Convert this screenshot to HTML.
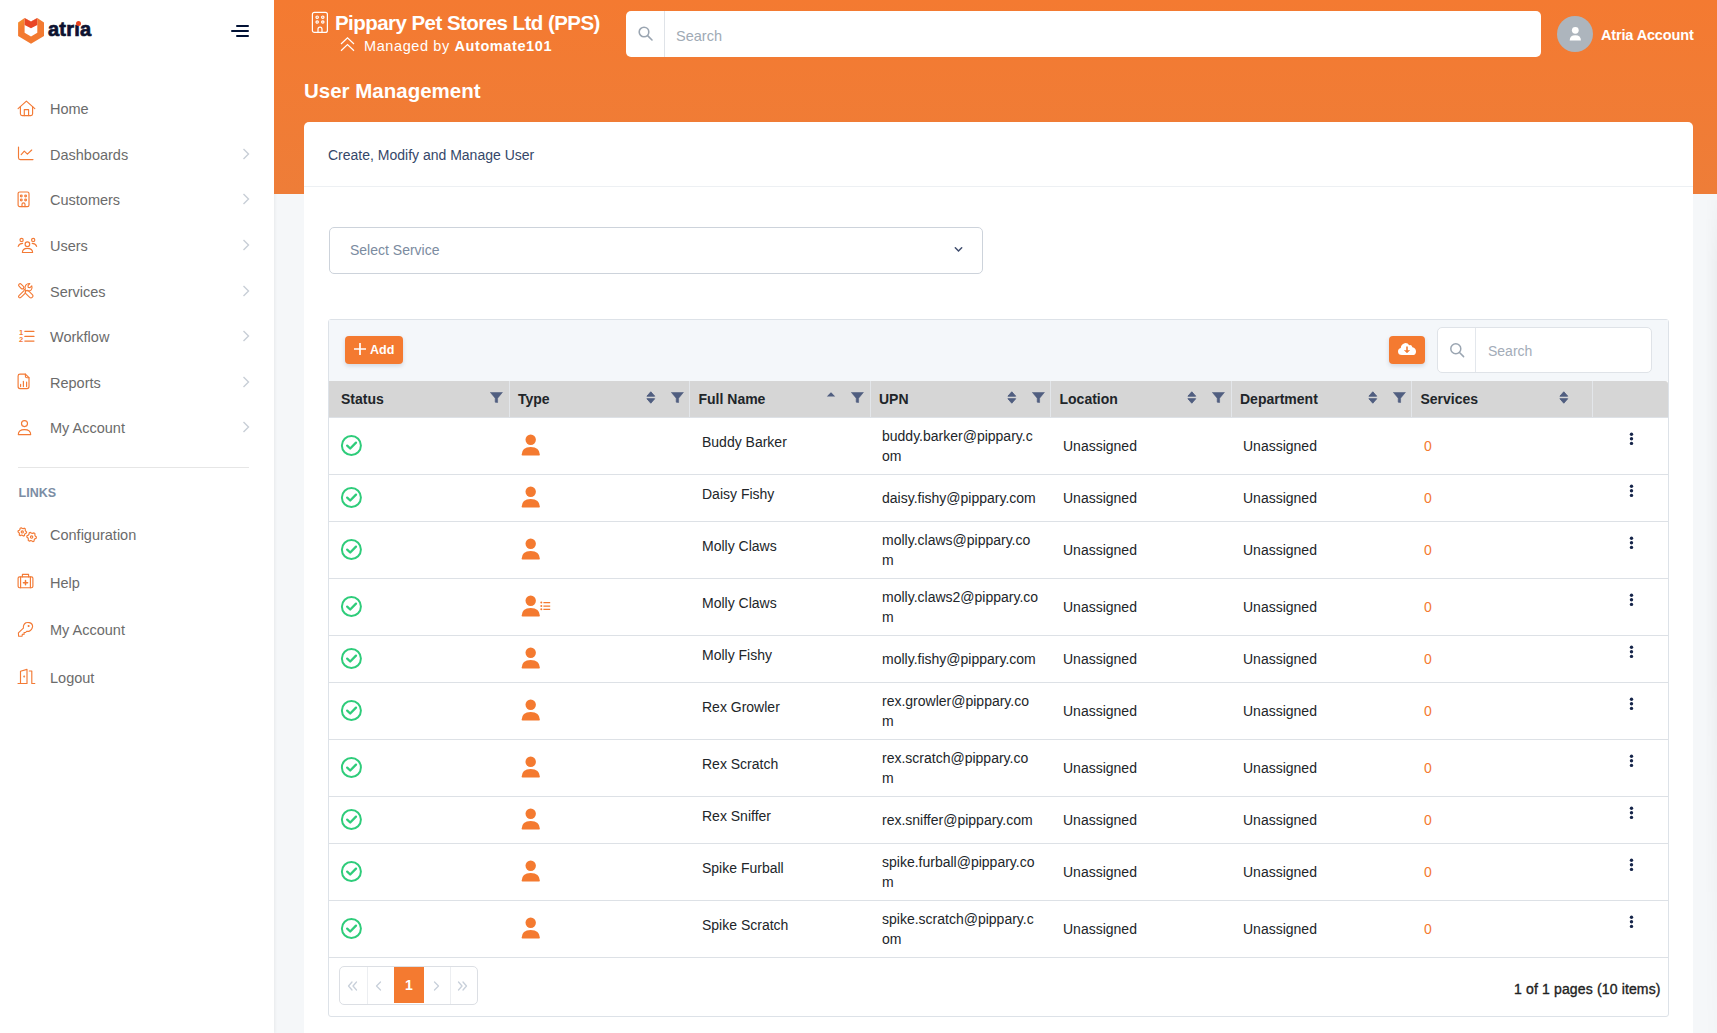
<!DOCTYPE html>
<html><head><meta charset="utf-8">
<style>
*{box-sizing:border-box;margin:0;padding:0}
html,body{width:1717px;height:1033px;overflow:hidden;background:#f5f7f9;font-family:"Liberation Sans",sans-serif}
.abs{position:absolute}
.tx{height:16px;line-height:16px;white-space:nowrap}
#side{position:absolute;left:0;top:0;width:274px;height:1033px;background:#fff;box-shadow:1px 0 3px rgba(0,0,0,.06)}
.nt{position:absolute;left:50px;height:20px;line-height:20px;font-size:14.5px;color:#6b6b6b;white-space:nowrap}
.nav{position:absolute;left:0;width:274px;height:20px;font-size:15px;color:#5f6368;line-height:20px}
.nav .t{position:absolute;left:50px;top:0}
.nav svg.i{position:absolute;left:18px;top:1px}
.nav svg.c{position:absolute;left:240px;top:4px}
#band{position:absolute;left:274px;top:0;width:1443px;height:194px;background:linear-gradient(#f47a31,#ee7d38)}
#card{position:absolute;left:304px;top:122px;width:1389px;height:920px;background:#fff;border-radius:5px 5px 0 0}
</style></head>
<body>

<div id="side">
 <svg class="abs" style="left:15px;top:15px" width="32" height="32" viewBox="0 0 32 32">
  <defs><linearGradient id="lg" x1="0" y1="0" x2="0.5" y2="0.6"><stop offset="0" stop-color="#f6962a"/><stop offset="0.5" stop-color="#f37a30"/><stop offset="1" stop-color="#f37a30"/></linearGradient></defs>
  <path d="M3.1 7.4 L9.6 2.9 L16 6.5 L22.3 2.9 L29 7.4 L29 21.1 L16 28.8 L3.1 21.1 Z" fill="url(#lg)"/>
  <path d="M9.6 2.9 L16 6.5 L22.3 2.9 L22.3 17.8 L16 21.4 L9.6 17.8 Z" fill="#fff"/>
  <path d="M9.6 2.9 L16 6.5 L22.3 2.9 L22.3 9.9 L16 13.3 L9.6 9.9 Z" fill="#e94624"/>
 </svg>
 <div class="abs" style="left:48px;top:17px;height:24px;line-height:24px;font-size:20px;font-weight:bold;color:#0d1230;letter-spacing:0.2px;-webkit-text-stroke:0.7px #0d1230">atr&#305;a</div>
 <div class="abs" style="left:76px;top:20.5px;width:5px;height:5px;border-radius:50%;background:#e9441f"></div>
 <svg class="abs" style="left:230px;top:24px" width="20" height="14"><rect x="6" y="1" width="13" height="2" rx="1" fill="#011135"/><rect x="1" y="6" width="18" height="2" rx="1" fill="#011135"/><rect x="6" y="11" width="13" height="2" rx="1" fill="#011135"/></svg>
<div class="nt" style="top:99px">Home</div>
<div class="nt" style="top:145px">Dashboards</div>
<svg class="abs" style="left:242px;top:148px" width="8" height="12" viewBox="0 0 8 12"><path d="M1.5 1 L6.5 6 L1.5 11" fill="none" stroke="#c8ced6" stroke-width="1.4"/></svg>
<div class="nt" style="top:190px">Customers</div>
<svg class="abs" style="left:242px;top:193px" width="8" height="12" viewBox="0 0 8 12"><path d="M1.5 1 L6.5 6 L1.5 11" fill="none" stroke="#c8ced6" stroke-width="1.4"/></svg>
<div class="nt" style="top:236px">Users</div>
<svg class="abs" style="left:242px;top:239px" width="8" height="12" viewBox="0 0 8 12"><path d="M1.5 1 L6.5 6 L1.5 11" fill="none" stroke="#c8ced6" stroke-width="1.4"/></svg>
<div class="nt" style="top:282px">Services</div>
<svg class="abs" style="left:242px;top:285px" width="8" height="12" viewBox="0 0 8 12"><path d="M1.5 1 L6.5 6 L1.5 11" fill="none" stroke="#c8ced6" stroke-width="1.4"/></svg>
<div class="nt" style="top:327px">Workflow</div>
<svg class="abs" style="left:242px;top:330px" width="8" height="12" viewBox="0 0 8 12"><path d="M1.5 1 L6.5 6 L1.5 11" fill="none" stroke="#c8ced6" stroke-width="1.4"/></svg>
<div class="nt" style="top:373px">Reports</div>
<svg class="abs" style="left:242px;top:376px" width="8" height="12" viewBox="0 0 8 12"><path d="M1.5 1 L6.5 6 L1.5 11" fill="none" stroke="#c8ced6" stroke-width="1.4"/></svg>
<div class="nt" style="top:418px">My Account</div>
<svg class="abs" style="left:242px;top:421px" width="8" height="12" viewBox="0 0 8 12"><path d="M1.5 1 L6.5 6 L1.5 11" fill="none" stroke="#c8ced6" stroke-width="1.4"/></svg>
<div class="abs" style="left:18px;top:467px;width:231px;height:1px;background:#e6e6e6"></div>
<div class="abs" style="left:18.5px;top:485.5px;font-size:12.5px;font-weight:bold;color:#7b8da4;letter-spacing:0.05px">LINKS</div>
<div class="nt" style="top:525px">Configuration</div>
<div class="nt" style="top:573px">Help</div>
<div class="nt" style="top:620px">My Account</div>
<div class="nt" style="top:668px">Logout</div>
<svg class="abs" style="left:17px;top:100px" width="20" height="18" viewBox="0 0 20 18" fill="none" stroke="#f37a35" stroke-width="1.15" stroke-linecap="round" stroke-linejoin="round"><path d="M1.1 8.6 L9.4 1.1 L17.8 8.6"/><path d="M3.4 6.6 V13.8 Q3.4 15.6 5.2 15.6 H13.8 Q15.6 15.6 15.6 13.8 V6.6"/><path d="M7.3 15.6 V9.6 H11.6 V15.6"/></svg>
<svg class="abs" style="left:17px;top:146px" width="18" height="16" viewBox="0 0 18 16" fill="none" stroke="#f37a35" stroke-width="1.15" stroke-linecap="round" stroke-linejoin="round"><path d="M1.5 1 V11.8 Q1.5 13.6 3.3 13.6 H16"/><path d="M4.2 8.6 L7.3 5.1 L10.4 8.2 L14.7 4"/></svg>
<svg class="abs" style="left:17px;top:191px" width="14" height="17" viewBox="0 0 14 17" fill="none" stroke="#f37a35" stroke-width="1.15" stroke-linecap="round" stroke-linejoin="round"><rect x="1.1" y="1" width="10.9" height="14.6" rx="1.6"/><circle cx="4.3" cy="4.9" r="0.9"/><circle cx="8.6" cy="4.9" r="0.9"/><circle cx="4.3" cy="8.9" r="0.9"/><circle cx="8.6" cy="8.9" r="0.9"/><path d="M5 15.6 V13.3 A1.5 1.5 0 0 1 8 13.3 V15.6"/></svg>
<svg class="abs" style="left:17px;top:237px" width="21" height="17" viewBox="0 0 21 17" fill="none" stroke="#f37a35" stroke-width="1.15" stroke-linecap="round" stroke-linejoin="round"><circle cx="10.4" cy="7.2" r="2.3"/><path d="M5.4 15.5 Q5.4 11.3 10.4 11.3 Q15.6 11.3 15.6 15.5 Z"/><circle cx="4.6" cy="2.9" r="1.6"/><circle cx="16.2" cy="2.9" r="1.6"/><path d="M1.2 9.4 Q2 6.6 5.6 6.4"/><path d="M15.2 6.4 Q18.8 6.6 19.6 9.4"/></svg>
<svg class="abs" style="left:17px;top:282px" width="17" height="17" viewBox="0 0 17 17" fill="none" stroke="#f37a35" stroke-width="1.1" stroke-linecap="round" stroke-linejoin="round"><rect x="1.2" y="2.8" width="6" height="3" rx="1.4" transform="rotate(45 4.2 4.3)"/><path d="M6.4 6.6 L8.8 8.9"/><rect x="7.6" y="10.2" width="9" height="3.8" rx="1.8" transform="rotate(45 12.1 12.1)"/><path d="M7 8.6 L2 13.6 Q1 14.8 2.2 15.6 Q3.2 16.2 4.2 15.2 L8.6 10.8"/><path d="M8.4 7.2 Q7.4 5 8.8 3.2 Q10.6 1.2 12.8 1.6 L11 3.6 L11.2 5.4 L13 5.6 L14.8 3.8 Q15.6 6.2 14.2 7.8 Q12.6 9.4 10.4 8.8"/></svg>
<div class="abs" style="left:19px;top:328.5px;font-size:7.5px;line-height:7px;color:#f37a35;font-weight:bold">1<br>2</div>
<svg class="abs" style="left:23px;top:329px" width="13" height="14" viewBox="0 0 13 14" fill="none" stroke="#f37a35" stroke-width="1.15" stroke-linecap="round" stroke-linejoin="round"><path d="M1.8 2.3 H11"/><path d="M1.8 7.4 H11"/><path d="M1.8 12.1 H11"/></svg>
<svg class="abs" style="left:17px;top:373px" width="14" height="17" viewBox="0 0 14 17" fill="none" stroke="#f37a35" stroke-width="1.15" stroke-linecap="round" stroke-linejoin="round"><path d="M3 1.1 H8.4 L12 4.7 V13.6 Q12 15.6 10 15.6 H3 Q1.1 15.6 1.1 13.6 V3 Q1.1 1.1 3 1.1 Z"/><path d="M8.4 1.1 V3.2 Q8.4 4.7 10 4.7 H12"/><path d="M3.6 11.4 V13.6"/><path d="M6.4 8.4 V13.6"/><path d="M9.6 9 V13.6"/></svg>
<svg class="abs" style="left:17px;top:419px" width="15" height="17" viewBox="0 0 15 17" fill="none" stroke="#f37a35" stroke-width="1.15" stroke-linecap="round" stroke-linejoin="round"><circle cx="7.5" cy="4.6" r="3"/><path d="M1.3 15.6 Q1.3 10.6 7.5 10.6 Q13.7 10.6 13.7 15.6 Z"/></svg>
<svg class="abs" style="left:17px;top:526px" width="21" height="17" viewBox="0 0 21 17" fill="none" stroke="#f37a35" stroke-width="1.15" stroke-linecap="round" stroke-linejoin="round"><path d="M9.60 5.90 L9.45 7.01 L8.20 7.58 L7.67 8.27 L7.45 9.62 L6.41 10.05 L5.30 9.25 L4.43 9.14 L3.15 9.62 L2.26 8.94 L2.40 7.58 L2.06 6.77 L1.00 5.90 L1.15 4.79 L2.40 4.22 L2.93 3.53 L3.15 2.18 L4.19 1.75 L5.30 2.55 L6.17 2.66 L7.45 2.18 L8.34 2.86 L8.20 4.22 L8.54 5.03 Z"/><circle cx="5.3" cy="5.9" r="1.1"/><path d="M19.40 11.00 L19.24 12.24 L17.84 12.87 L17.25 13.65 L17.00 15.16 L15.84 15.64 L14.60 14.74 L13.63 14.62 L12.20 15.16 L11.21 14.39 L11.36 12.87 L10.98 11.97 L9.80 11.00 L9.96 9.76 L11.36 9.13 L11.95 8.35 L12.20 6.84 L13.36 6.36 L14.60 7.26 L15.57 7.38 L17.00 6.84 L17.99 7.61 L17.84 9.13 L18.22 10.03 Z"/><circle cx="14.6" cy="11" r="1.2"/></svg>
<svg class="abs" style="left:17px;top:573px" width="17" height="16" viewBox="0 0 17 16" fill="none" stroke="#f37a35" stroke-width="1.15" stroke-linecap="round" stroke-linejoin="round"><rect x="1.1" y="3.8" width="14.8" height="10.9" rx="1.4"/><path d="M5.4 3.8 V1.4 H11.6 V3.8"/><path d="M3.6 3.8 V14.7"/><path d="M13.4 3.8 V14.7"/><path d="M8.5 7.6 V11.8 M6.4 9.7 H10.6" stroke-width="1.5"/></svg>
<svg class="abs" style="left:17px;top:621px" width="17" height="17" viewBox="0 0 17 17" fill="none" stroke="#f37a35" stroke-width="1.1" stroke-linecap="round" stroke-linejoin="round"><path d="M6.4 7.2 Q6 3.6 8.9 1.8 Q10.6 1.2 12.3 1.6 Q15.6 2.4 15.6 5.5 Q15.2 9 11.9 10.4 L9.6 10.4 L8.6 11.5 L7 11.5 L7.2 13.2 L5.3 13.4 L5.1 15.3 L1.6 15.3 L1.4 11.9 Z"/><circle cx="11.6" cy="5" r="0.5" fill="#f37a35"/></svg>
<svg class="abs" style="left:17px;top:668px" width="19" height="17" viewBox="0 0 19 17" fill="none" stroke="#f37a35" stroke-width="1.15" stroke-linecap="round" stroke-linejoin="round"><path d="M1 15.5 H3.5 M3.5 15.5 V3.2 L10 1.4 V15.5 H1"/><path d="M12.3 3 H14.8 V15.5 H17.8"/><circle cx="7.2" cy="8.5" r="0.4" fill="{O}"/></svg>

</div>
<div id="band"></div>
<svg class="abs" style="left:311px;top:11px" width="18" height="23" viewBox="0 0 18 23" fill="none" stroke="#fff" stroke-width="1.2"><rect x="1.4" y="1.4" width="15" height="20" rx="2"/><circle cx="6.2" cy="6.2" r="1.2"/><circle cx="11.8" cy="6.2" r="1.2"/><circle cx="6.2" cy="11" r="1.2"/><circle cx="11.8" cy="11" r="1.2"/><path d="M7 21.4 V18.2 A2 2 0 0 1 11 18.2 V21.4"/></svg>
<div class="abs" style="left:335px;top:10px;height:26px;line-height:26px;font-size:20.5px;font-weight:bold;color:#fff;white-space:nowrap;letter-spacing:-0.55px">Pippary Pet Stores Ltd (PPS)</div>
<svg class="abs" style="left:339px;top:36px" width="17" height="17" viewBox="0 0 17 17" fill="none" stroke="#fff" stroke-width="1.2"><path d="M2 8 L8.5 1.8 L15 8"/><path d="M2 14.8 L8.5 8.6 L15 14.8"/></svg>
<div class="abs" style="left:364px;top:37px;height:18px;line-height:18px;font-size:14.5px;color:#fff;white-space:nowrap;letter-spacing:0.6px">Managed by <b>Automate101</b></div>
<div class="abs" style="left:626px;top:11px;width:915px;height:46px;background:#fff;border-radius:5px"></div>
<div class="abs" style="left:664px;top:11px;width:1px;height:46px;background:#dfe3e8"></div>
<svg class="abs" style="left:637px;top:25px" width="17" height="17" viewBox="0 0 17 17" fill="none" stroke="#9aa5b1" stroke-width="1.6"><circle cx="7" cy="7" r="4.8"/><path d="M10.6 10.6 L15 15" stroke-linecap="round"/></svg>
<div class="abs" style="left:676px;top:27px;height:18px;line-height:18px;font-size:14.5px;color:#a0aab5">Search</div>
<div class="abs" style="left:1557px;top:16px;width:36px;height:36px;border-radius:50%;background:#adb5bd"></div>
<svg class="abs" style="left:1569px;top:26px" width="13" height="16" viewBox="0 0 13 16" fill="#fff"><circle cx="6.3" cy="4.3" r="3.4"/><path d="M0.7 14.6 Q0.7 9.2 6.3 9.2 Q11.9 9.2 11.9 14.6 Z"/></svg>
<div class="abs" style="left:1601px;top:26px;height:18px;line-height:18px;font-size:14.5px;font-weight:bold;color:#fff;white-space:nowrap;letter-spacing:-0.15px">Atria Account</div>
<div class="abs" style="left:304px;top:79px;height:24px;line-height:24px;font-size:20.5px;font-weight:bold;color:#fff;white-space:nowrap">User Management</div>
<div class="abs" style="left:1705px;top:200px;width:12px;height:833px;background:linear-gradient(to right,rgba(0,0,0,0),rgba(0,0,0,0.035));-webkit-mask-image:linear-gradient(rgba(0,0,0,0.3),#000 8%,#000 55%,rgba(0,0,0,0.2))"></div>
<div id="card"></div>
<div class="abs" style="left:328px;top:145.5px;height:18px;line-height:18px;font-size:14px;color:#354769;white-space:nowrap">Create, Modify and Manage User</div>
<div class="abs" style="left:304px;top:186px;width:1389px;height:1px;background:#edf0f3"></div>
<!--MAIN-->
<div class="abs" style="left:329px;top:227px;width:654px;height:47px;border:1px solid #cdd3db;border-radius:5px;background:#fff"></div>
<div class="abs tx" style="left:350px;top:242px;font-size:14px;color:#7b8ba0">Select Service</div>
<svg class="abs" style="left:954px;top:246px" width="9" height="7" viewBox="0 0 9 7" fill="none" stroke="#3f4c6d" stroke-width="1.5" stroke-linecap="round"><path d="M1.3 1.8 L4.5 5 L7.7 1.8"/></svg>
<div class="abs" style="left:328px;top:319px;width:1341px;height:698px;border:1px solid #dde2e8;border-radius:3px;background:#fff"></div>
<div class="abs" style="left:329px;top:320px;width:1339px;height:61px;background:#f4f7fa"></div>
<div class="abs" style="left:345px;top:336px;width:58px;height:28px;background:#f47a30;border-radius:4px;box-shadow:0 2px 4px rgba(60,80,110,.18)"></div>
<svg class="abs" style="left:353px;top:342px" width="14" height="14" viewBox="0 0 14 14" stroke="#fff" stroke-width="1.7"><path d="M7 1 V13 M1 7 H13"/></svg>
<div class="abs tx" style="left:370px;top:342px;font-size:12.5px;font-weight:bold;color:#fff;line-height:16px;height:16px">Add</div>
<div class="abs" style="left:1389px;top:336px;width:36px;height:28px;background:#f47a30;border-radius:4px;box-shadow:0 2px 4px rgba(60,80,110,.18)"></div>
<svg class="abs" style="left:1397px;top:341px" width="20" height="15" viewBox="0 0 20 15"><path d="M5 14 Q1 14 1 10.5 Q1 7.6 3.8 7 Q4 3.2 7.6 2.2 Q10.6 1.6 12.2 4.2 Q14.6 3.4 15.4 6.2 Q19 7 19 10.4 Q19 14 15.4 14 Z" fill="#fff"/><path d="M10 5.6 V11" stroke="#f47a30" stroke-width="1.6"/><path d="M7.4 9.2 L10 11.8 L12.6 9.2" fill="#f47a30" stroke="#f47a30" stroke-width="0.8"/></svg>
<div class="abs" style="left:1437px;top:327px;width:215px;height:46px;border:1px solid #dfe3e8;border-radius:5px;background:#fff"></div>
<div class="abs" style="left:1475px;top:328px;width:1px;height:44px;background:#e3e7ec"></div>
<svg class="abs" style="left:1449px;top:342px" width="17" height="17" viewBox="0 0 17 17" fill="none" stroke="#9aa5b1" stroke-width="1.5"><circle cx="6.8" cy="6.8" r="5"/><path d="M10.5 10.5 L14.6 14.6" stroke-linecap="round"/></svg>
<div class="abs tx" style="left:1488px;top:343px;font-size:14px;color:#a3acb8">Search</div>
<div class="abs" style="left:329px;top:381px;width:1339px;height:36px;background:#d6d6d6;border-radius:0 3px 0 0"></div>
<div class="abs" style="left:329px;top:417px;width:1339px;height:1px;background:#dde1e6"></div>
<div class="abs" style="left:509px;top:381px;width:1px;height:36px;background:#e3e6ea"></div>
<div class="abs" style="left:689px;top:381px;width:1px;height:36px;background:#e3e6ea"></div>
<div class="abs" style="left:870px;top:381px;width:1px;height:36px;background:#e3e6ea"></div>
<div class="abs" style="left:1050px;top:381px;width:1px;height:36px;background:#e3e6ea"></div>
<div class="abs" style="left:1231px;top:381px;width:1px;height:36px;background:#e3e6ea"></div>
<div class="abs" style="left:1411px;top:381px;width:1px;height:36px;background:#e3e6ea"></div>
<div class="abs" style="left:1592px;top:381px;width:1px;height:36px;background:#e3e6ea"></div>
<div class="abs tx" style="left:341px;top:391px;font-size:14px;font-weight:bold;color:#212529">Status</div>
<div class="abs tx" style="left:518px;top:391px;font-size:14px;font-weight:bold;color:#212529">Type</div>
<div class="abs tx" style="left:698.5px;top:391px;font-size:14px;font-weight:bold;color:#212529">Full Name</div>
<div class="abs tx" style="left:879px;top:391px;font-size:14px;font-weight:bold;color:#212529">UPN</div>
<div class="abs tx" style="left:1059.5px;top:391px;font-size:14px;font-weight:bold;color:#212529">Location</div>
<div class="abs tx" style="left:1240px;top:391px;font-size:14px;font-weight:bold;color:#212529">Department</div>
<div class="abs tx" style="left:1420.5px;top:391px;font-size:14px;font-weight:bold;color:#212529">Services</div>
<svg class="abs" style="left:489.5px;top:392px" width="13" height="11" viewBox="0 0 13 11" fill="#505e80"><path d="M0.4 0.4 H12.4 L7.6 6.2 V10.6 L5.2 10.2 V6.2 Z" stroke="#505e80" stroke-width="0.6" stroke-linejoin="round"/></svg>
<svg class="abs" style="left:645.5px;top:391px" width="10" height="13" viewBox="0 0 10 13" fill="#505e80" stroke="#505e80" stroke-width="0.9" stroke-linejoin="round"><path d="M0.9 5.2 L4.8 0.8 L8.7 5.2 Z"/><path d="M0.9 7.7 L4.8 12.2 L8.7 7.7 Z"/></svg>
<svg class="abs" style="left:670.5px;top:392px" width="13" height="11" viewBox="0 0 13 11" fill="#505e80"><path d="M0.4 0.4 H12.4 L7.6 6.2 V10.6 L5.2 10.2 V6.2 Z" stroke="#505e80" stroke-width="0.6" stroke-linejoin="round"/></svg>
<svg class="abs" style="left:826px;top:391px" width="10" height="13" viewBox="0 0 10 13" fill="#505e80"><path d="M0.8 5.6 L5 1.2 L9.2 5.6 Z"/></svg>
<svg class="abs" style="left:851px;top:392px" width="13" height="11" viewBox="0 0 13 11" fill="#505e80"><path d="M0.4 0.4 H12.4 L7.6 6.2 V10.6 L5.2 10.2 V6.2 Z" stroke="#505e80" stroke-width="0.6" stroke-linejoin="round"/></svg>
<svg class="abs" style="left:1006.5px;top:391px" width="10" height="13" viewBox="0 0 10 13" fill="#505e80" stroke="#505e80" stroke-width="0.9" stroke-linejoin="round"><path d="M0.9 5.2 L4.8 0.8 L8.7 5.2 Z"/><path d="M0.9 7.7 L4.8 12.2 L8.7 7.7 Z"/></svg>
<svg class="abs" style="left:1031.5px;top:392px" width="13" height="11" viewBox="0 0 13 11" fill="#505e80"><path d="M0.4 0.4 H12.4 L7.6 6.2 V10.6 L5.2 10.2 V6.2 Z" stroke="#505e80" stroke-width="0.6" stroke-linejoin="round"/></svg>
<svg class="abs" style="left:1187px;top:391px" width="10" height="13" viewBox="0 0 10 13" fill="#505e80" stroke="#505e80" stroke-width="0.9" stroke-linejoin="round"><path d="M0.9 5.2 L4.8 0.8 L8.7 5.2 Z"/><path d="M0.9 7.7 L4.8 12.2 L8.7 7.7 Z"/></svg>
<svg class="abs" style="left:1212px;top:392px" width="13" height="11" viewBox="0 0 13 11" fill="#505e80"><path d="M0.4 0.4 H12.4 L7.6 6.2 V10.6 L5.2 10.2 V6.2 Z" stroke="#505e80" stroke-width="0.6" stroke-linejoin="round"/></svg>
<svg class="abs" style="left:1367.5px;top:391px" width="10" height="13" viewBox="0 0 10 13" fill="#505e80" stroke="#505e80" stroke-width="0.9" stroke-linejoin="round"><path d="M0.9 5.2 L4.8 0.8 L8.7 5.2 Z"/><path d="M0.9 7.7 L4.8 12.2 L8.7 7.7 Z"/></svg>
<svg class="abs" style="left:1392.5px;top:392px" width="13" height="11" viewBox="0 0 13 11" fill="#505e80"><path d="M0.4 0.4 H12.4 L7.6 6.2 V10.6 L5.2 10.2 V6.2 Z" stroke="#505e80" stroke-width="0.6" stroke-linejoin="round"/></svg>
<svg class="abs" style="left:1558.5px;top:391px" width="10" height="13" viewBox="0 0 10 13" fill="#505e80" stroke="#505e80" stroke-width="0.9" stroke-linejoin="round"><path d="M0.9 5.2 L4.8 0.8 L8.7 5.2 Z"/><path d="M0.9 7.7 L4.8 12.2 L8.7 7.7 Z"/></svg>
<div class="abs" style="left:329px;top:474px;width:1339px;height:1px;background:#dde1e6"></div>
<svg class="abs" style="left:340px;top:434.0px" width="23" height="23" viewBox="0 0 23 23" fill="none" stroke="#2ecc7a" stroke-width="2"><circle cx="11.4" cy="11.5" r="9.5"/><path d="M7.2 11.6 L10.2 14.5 L16 8.6" stroke-width="2.3" stroke-linecap="round" stroke-linejoin="round"/></svg>
<svg class="abs" style="left:520px;top:434.0px" width="32" height="22" viewBox="0 0 32 22" fill="#f47a30"><circle cx="10.7" cy="5.8" r="5.2"/><path d="M1.6 20.8 Q1.8 12.9 10.7 12.9 Q19.6 12.9 19.9 20.8 Q19.9 21.6 19 21.6 H2.5 Q1.6 21.6 1.6 20.8 Z"/></svg>
<div class="abs tx" style="left:702px;top:434.0px;font-size:14px;color:#212529">Buddy Barker</div>
<div class="abs tx" style="left:882px;top:426.0px;font-size:14px;color:#212529;line-height:20px;height:40px">buddy.barker@pippary.c<br>om</div>
<div class="abs tx" style="left:1063px;top:438.0px;font-size:14px;color:#212529">Unassigned</div>
<div class="abs tx" style="left:1243px;top:438.0px;font-size:14px;color:#212529">Unassigned</div>
<div class="abs tx" style="left:1424px;top:438.0px;font-size:14px;color:#f47a30">0</div>
<svg class="abs" style="left:1629px;top:432.0px" width="5" height="14" viewBox="0 0 5 14" fill="#16254a"><circle cx="2.5" cy="2.2" r="1.7"/><circle cx="2.5" cy="6.8" r="1.7"/><circle cx="2.5" cy="11.4" r="1.7"/></svg>
<div class="abs" style="left:329px;top:521px;width:1339px;height:1px;background:#dde1e6"></div>
<svg class="abs" style="left:340px;top:486.0px" width="23" height="23" viewBox="0 0 23 23" fill="none" stroke="#2ecc7a" stroke-width="2"><circle cx="11.4" cy="11.5" r="9.5"/><path d="M7.2 11.6 L10.2 14.5 L16 8.6" stroke-width="2.3" stroke-linecap="round" stroke-linejoin="round"/></svg>
<svg class="abs" style="left:520px;top:486.0px" width="32" height="22" viewBox="0 0 32 22" fill="#f47a30"><circle cx="10.7" cy="5.8" r="5.2"/><path d="M1.6 20.8 Q1.8 12.9 10.7 12.9 Q19.6 12.9 19.9 20.8 Q19.9 21.6 19 21.6 H2.5 Q1.6 21.6 1.6 20.8 Z"/></svg>
<div class="abs tx" style="left:702px;top:486.0px;font-size:14px;color:#212529">Daisy Fishy</div>
<div class="abs tx" style="left:882px;top:490.0px;font-size:14px;color:#212529">daisy.fishy@pippary.com</div>
<div class="abs tx" style="left:1063px;top:490.0px;font-size:14px;color:#212529">Unassigned</div>
<div class="abs tx" style="left:1243px;top:490.0px;font-size:14px;color:#212529">Unassigned</div>
<div class="abs tx" style="left:1424px;top:490.0px;font-size:14px;color:#f47a30">0</div>
<svg class="abs" style="left:1629px;top:484.0px" width="5" height="14" viewBox="0 0 5 14" fill="#16254a"><circle cx="2.5" cy="2.2" r="1.7"/><circle cx="2.5" cy="6.8" r="1.7"/><circle cx="2.5" cy="11.4" r="1.7"/></svg>
<div class="abs" style="left:329px;top:578px;width:1339px;height:1px;background:#dde1e6"></div>
<svg class="abs" style="left:340px;top:538.0px" width="23" height="23" viewBox="0 0 23 23" fill="none" stroke="#2ecc7a" stroke-width="2"><circle cx="11.4" cy="11.5" r="9.5"/><path d="M7.2 11.6 L10.2 14.5 L16 8.6" stroke-width="2.3" stroke-linecap="round" stroke-linejoin="round"/></svg>
<svg class="abs" style="left:520px;top:538.0px" width="32" height="22" viewBox="0 0 32 22" fill="#f47a30"><circle cx="10.7" cy="5.8" r="5.2"/><path d="M1.6 20.8 Q1.8 12.9 10.7 12.9 Q19.6 12.9 19.9 20.8 Q19.9 21.6 19 21.6 H2.5 Q1.6 21.6 1.6 20.8 Z"/></svg>
<div class="abs tx" style="left:702px;top:538.0px;font-size:14px;color:#212529">Molly Claws</div>
<div class="abs tx" style="left:882px;top:530.0px;font-size:14px;color:#212529;line-height:20px;height:40px">molly.claws@pippary.co<br>m</div>
<div class="abs tx" style="left:1063px;top:542.0px;font-size:14px;color:#212529">Unassigned</div>
<div class="abs tx" style="left:1243px;top:542.0px;font-size:14px;color:#212529">Unassigned</div>
<div class="abs tx" style="left:1424px;top:542.0px;font-size:14px;color:#f47a30">0</div>
<svg class="abs" style="left:1629px;top:536.0px" width="5" height="14" viewBox="0 0 5 14" fill="#16254a"><circle cx="2.5" cy="2.2" r="1.7"/><circle cx="2.5" cy="6.8" r="1.7"/><circle cx="2.5" cy="11.4" r="1.7"/></svg>
<div class="abs" style="left:329px;top:635px;width:1339px;height:1px;background:#dde1e6"></div>
<svg class="abs" style="left:340px;top:595.0px" width="23" height="23" viewBox="0 0 23 23" fill="none" stroke="#2ecc7a" stroke-width="2"><circle cx="11.4" cy="11.5" r="9.5"/><path d="M7.2 11.6 L10.2 14.5 L16 8.6" stroke-width="2.3" stroke-linecap="round" stroke-linejoin="round"/></svg>
<svg class="abs" style="left:520px;top:595.0px" width="32" height="22" viewBox="0 0 32 22" fill="#f47a30"><circle cx="10.7" cy="5.8" r="5.2"/><path d="M1.6 20.8 Q1.8 12.9 10.7 12.9 Q19.6 12.9 19.9 20.8 Q19.9 21.6 19 21.6 H2.5 Q1.6 21.6 1.6 20.8 Z"/><circle cx="21.3" cy="7.6" r="1"/><circle cx="21.3" cy="11.1" r="1"/><circle cx="21.3" cy="14.3" r="1"/><path d="M23.4 7 H30.2 V8.2 H23.4Z M23.4 10.5 H30.2 V11.7 H23.4Z M23.4 13.7 H30.2 V14.9 H23.4Z"/></svg>
<div class="abs tx" style="left:702px;top:595.0px;font-size:14px;color:#212529">Molly Claws</div>
<div class="abs tx" style="left:882px;top:587.0px;font-size:14px;color:#212529;line-height:20px;height:40px">molly.claws2@pippary.co<br>m</div>
<div class="abs tx" style="left:1063px;top:599.0px;font-size:14px;color:#212529">Unassigned</div>
<div class="abs tx" style="left:1243px;top:599.0px;font-size:14px;color:#212529">Unassigned</div>
<div class="abs tx" style="left:1424px;top:599.0px;font-size:14px;color:#f47a30">0</div>
<svg class="abs" style="left:1629px;top:593.0px" width="5" height="14" viewBox="0 0 5 14" fill="#16254a"><circle cx="2.5" cy="2.2" r="1.7"/><circle cx="2.5" cy="6.8" r="1.7"/><circle cx="2.5" cy="11.4" r="1.7"/></svg>
<div class="abs" style="left:329px;top:682px;width:1339px;height:1px;background:#dde1e6"></div>
<svg class="abs" style="left:340px;top:647.0px" width="23" height="23" viewBox="0 0 23 23" fill="none" stroke="#2ecc7a" stroke-width="2"><circle cx="11.4" cy="11.5" r="9.5"/><path d="M7.2 11.6 L10.2 14.5 L16 8.6" stroke-width="2.3" stroke-linecap="round" stroke-linejoin="round"/></svg>
<svg class="abs" style="left:520px;top:647.0px" width="32" height="22" viewBox="0 0 32 22" fill="#f47a30"><circle cx="10.7" cy="5.8" r="5.2"/><path d="M1.6 20.8 Q1.8 12.9 10.7 12.9 Q19.6 12.9 19.9 20.8 Q19.9 21.6 19 21.6 H2.5 Q1.6 21.6 1.6 20.8 Z"/></svg>
<div class="abs tx" style="left:702px;top:647.0px;font-size:14px;color:#212529">Molly Fishy</div>
<div class="abs tx" style="left:882px;top:651.0px;font-size:14px;color:#212529">molly.fishy@pippary.com</div>
<div class="abs tx" style="left:1063px;top:651.0px;font-size:14px;color:#212529">Unassigned</div>
<div class="abs tx" style="left:1243px;top:651.0px;font-size:14px;color:#212529">Unassigned</div>
<div class="abs tx" style="left:1424px;top:651.0px;font-size:14px;color:#f47a30">0</div>
<svg class="abs" style="left:1629px;top:645.0px" width="5" height="14" viewBox="0 0 5 14" fill="#16254a"><circle cx="2.5" cy="2.2" r="1.7"/><circle cx="2.5" cy="6.8" r="1.7"/><circle cx="2.5" cy="11.4" r="1.7"/></svg>
<div class="abs" style="left:329px;top:739px;width:1339px;height:1px;background:#dde1e6"></div>
<svg class="abs" style="left:340px;top:699.0px" width="23" height="23" viewBox="0 0 23 23" fill="none" stroke="#2ecc7a" stroke-width="2"><circle cx="11.4" cy="11.5" r="9.5"/><path d="M7.2 11.6 L10.2 14.5 L16 8.6" stroke-width="2.3" stroke-linecap="round" stroke-linejoin="round"/></svg>
<svg class="abs" style="left:520px;top:699.0px" width="32" height="22" viewBox="0 0 32 22" fill="#f47a30"><circle cx="10.7" cy="5.8" r="5.2"/><path d="M1.6 20.8 Q1.8 12.9 10.7 12.9 Q19.6 12.9 19.9 20.8 Q19.9 21.6 19 21.6 H2.5 Q1.6 21.6 1.6 20.8 Z"/></svg>
<div class="abs tx" style="left:702px;top:699.0px;font-size:14px;color:#212529">Rex Growler</div>
<div class="abs tx" style="left:882px;top:691.0px;font-size:14px;color:#212529;line-height:20px;height:40px">rex.growler@pippary.co<br>m</div>
<div class="abs tx" style="left:1063px;top:703.0px;font-size:14px;color:#212529">Unassigned</div>
<div class="abs tx" style="left:1243px;top:703.0px;font-size:14px;color:#212529">Unassigned</div>
<div class="abs tx" style="left:1424px;top:703.0px;font-size:14px;color:#f47a30">0</div>
<svg class="abs" style="left:1629px;top:697.0px" width="5" height="14" viewBox="0 0 5 14" fill="#16254a"><circle cx="2.5" cy="2.2" r="1.7"/><circle cx="2.5" cy="6.8" r="1.7"/><circle cx="2.5" cy="11.4" r="1.7"/></svg>
<div class="abs" style="left:329px;top:796px;width:1339px;height:1px;background:#dde1e6"></div>
<svg class="abs" style="left:340px;top:756.0px" width="23" height="23" viewBox="0 0 23 23" fill="none" stroke="#2ecc7a" stroke-width="2"><circle cx="11.4" cy="11.5" r="9.5"/><path d="M7.2 11.6 L10.2 14.5 L16 8.6" stroke-width="2.3" stroke-linecap="round" stroke-linejoin="round"/></svg>
<svg class="abs" style="left:520px;top:756.0px" width="32" height="22" viewBox="0 0 32 22" fill="#f47a30"><circle cx="10.7" cy="5.8" r="5.2"/><path d="M1.6 20.8 Q1.8 12.9 10.7 12.9 Q19.6 12.9 19.9 20.8 Q19.9 21.6 19 21.6 H2.5 Q1.6 21.6 1.6 20.8 Z"/></svg>
<div class="abs tx" style="left:702px;top:756.0px;font-size:14px;color:#212529">Rex Scratch</div>
<div class="abs tx" style="left:882px;top:748.0px;font-size:14px;color:#212529;line-height:20px;height:40px">rex.scratch@pippary.co<br>m</div>
<div class="abs tx" style="left:1063px;top:760.0px;font-size:14px;color:#212529">Unassigned</div>
<div class="abs tx" style="left:1243px;top:760.0px;font-size:14px;color:#212529">Unassigned</div>
<div class="abs tx" style="left:1424px;top:760.0px;font-size:14px;color:#f47a30">0</div>
<svg class="abs" style="left:1629px;top:754.0px" width="5" height="14" viewBox="0 0 5 14" fill="#16254a"><circle cx="2.5" cy="2.2" r="1.7"/><circle cx="2.5" cy="6.8" r="1.7"/><circle cx="2.5" cy="11.4" r="1.7"/></svg>
<div class="abs" style="left:329px;top:843px;width:1339px;height:1px;background:#dde1e6"></div>
<svg class="abs" style="left:340px;top:808.0px" width="23" height="23" viewBox="0 0 23 23" fill="none" stroke="#2ecc7a" stroke-width="2"><circle cx="11.4" cy="11.5" r="9.5"/><path d="M7.2 11.6 L10.2 14.5 L16 8.6" stroke-width="2.3" stroke-linecap="round" stroke-linejoin="round"/></svg>
<svg class="abs" style="left:520px;top:808.0px" width="32" height="22" viewBox="0 0 32 22" fill="#f47a30"><circle cx="10.7" cy="5.8" r="5.2"/><path d="M1.6 20.8 Q1.8 12.9 10.7 12.9 Q19.6 12.9 19.9 20.8 Q19.9 21.6 19 21.6 H2.5 Q1.6 21.6 1.6 20.8 Z"/></svg>
<div class="abs tx" style="left:702px;top:808.0px;font-size:14px;color:#212529">Rex Sniffer</div>
<div class="abs tx" style="left:882px;top:812.0px;font-size:14px;color:#212529">rex.sniffer@pippary.com</div>
<div class="abs tx" style="left:1063px;top:812.0px;font-size:14px;color:#212529">Unassigned</div>
<div class="abs tx" style="left:1243px;top:812.0px;font-size:14px;color:#212529">Unassigned</div>
<div class="abs tx" style="left:1424px;top:812.0px;font-size:14px;color:#f47a30">0</div>
<svg class="abs" style="left:1629px;top:806.0px" width="5" height="14" viewBox="0 0 5 14" fill="#16254a"><circle cx="2.5" cy="2.2" r="1.7"/><circle cx="2.5" cy="6.8" r="1.7"/><circle cx="2.5" cy="11.4" r="1.7"/></svg>
<div class="abs" style="left:329px;top:900px;width:1339px;height:1px;background:#dde1e6"></div>
<svg class="abs" style="left:340px;top:860.0px" width="23" height="23" viewBox="0 0 23 23" fill="none" stroke="#2ecc7a" stroke-width="2"><circle cx="11.4" cy="11.5" r="9.5"/><path d="M7.2 11.6 L10.2 14.5 L16 8.6" stroke-width="2.3" stroke-linecap="round" stroke-linejoin="round"/></svg>
<svg class="abs" style="left:520px;top:860.0px" width="32" height="22" viewBox="0 0 32 22" fill="#f47a30"><circle cx="10.7" cy="5.8" r="5.2"/><path d="M1.6 20.8 Q1.8 12.9 10.7 12.9 Q19.6 12.9 19.9 20.8 Q19.9 21.6 19 21.6 H2.5 Q1.6 21.6 1.6 20.8 Z"/></svg>
<div class="abs tx" style="left:702px;top:860.0px;font-size:14px;color:#212529">Spike Furball</div>
<div class="abs tx" style="left:882px;top:852.0px;font-size:14px;color:#212529;line-height:20px;height:40px">spike.furball@pippary.co<br>m</div>
<div class="abs tx" style="left:1063px;top:864.0px;font-size:14px;color:#212529">Unassigned</div>
<div class="abs tx" style="left:1243px;top:864.0px;font-size:14px;color:#212529">Unassigned</div>
<div class="abs tx" style="left:1424px;top:864.0px;font-size:14px;color:#f47a30">0</div>
<svg class="abs" style="left:1629px;top:858.0px" width="5" height="14" viewBox="0 0 5 14" fill="#16254a"><circle cx="2.5" cy="2.2" r="1.7"/><circle cx="2.5" cy="6.8" r="1.7"/><circle cx="2.5" cy="11.4" r="1.7"/></svg>
<div class="abs" style="left:329px;top:957px;width:1339px;height:1px;background:#dde1e6"></div>
<svg class="abs" style="left:340px;top:917.0px" width="23" height="23" viewBox="0 0 23 23" fill="none" stroke="#2ecc7a" stroke-width="2"><circle cx="11.4" cy="11.5" r="9.5"/><path d="M7.2 11.6 L10.2 14.5 L16 8.6" stroke-width="2.3" stroke-linecap="round" stroke-linejoin="round"/></svg>
<svg class="abs" style="left:520px;top:917.0px" width="32" height="22" viewBox="0 0 32 22" fill="#f47a30"><circle cx="10.7" cy="5.8" r="5.2"/><path d="M1.6 20.8 Q1.8 12.9 10.7 12.9 Q19.6 12.9 19.9 20.8 Q19.9 21.6 19 21.6 H2.5 Q1.6 21.6 1.6 20.8 Z"/></svg>
<div class="abs tx" style="left:702px;top:917.0px;font-size:14px;color:#212529">Spike Scratch</div>
<div class="abs tx" style="left:882px;top:909.0px;font-size:14px;color:#212529;line-height:20px;height:40px">spike.scratch@pippary.c<br>om</div>
<div class="abs tx" style="left:1063px;top:921.0px;font-size:14px;color:#212529">Unassigned</div>
<div class="abs tx" style="left:1243px;top:921.0px;font-size:14px;color:#212529">Unassigned</div>
<div class="abs tx" style="left:1424px;top:921.0px;font-size:14px;color:#f47a30">0</div>
<svg class="abs" style="left:1629px;top:915.0px" width="5" height="14" viewBox="0 0 5 14" fill="#16254a"><circle cx="2.5" cy="2.2" r="1.7"/><circle cx="2.5" cy="6.8" r="1.7"/><circle cx="2.5" cy="11.4" r="1.7"/></svg>
<div class="abs" style="left:339px;top:966px;width:139px;height:39px;border:1px solid #dcdfe4;border-radius:5px;background:#fff"></div>
<div class="abs" style="left:367px;top:967px;width:1px;height:37px;background:#eceef1"></div>
<div class="abs" style="left:450px;top:967px;width:1px;height:37px;background:#eceef1"></div>
<div class="abs" style="left:394px;top:967px;width:30px;height:36px;background:#f47a30"></div>
<div class="abs tx" style="left:394px;top:977px;width:30px;text-align:center;font-size:14px;font-weight:bold;color:#fff">1</div>
<svg class="abs" style="left:347px;top:981px" width="11" height="10" viewBox="0 0 11 10" fill="none" stroke="#c8d0da" stroke-width="1.3" stroke-linecap="round" stroke-linejoin="round"><path d="M5 1 L1.5 5 L5 9"/><path d="M9.5 1 L6 5 L9.5 9"/></svg>
<svg class="abs" style="left:375px;top:981px" width="7" height="10" viewBox="0 0 7 10" fill="none" stroke="#c8d0da" stroke-width="1.3" stroke-linecap="round" stroke-linejoin="round"><path d="M5.5 1 L1.5 5 L5.5 9"/></svg>
<svg class="abs" style="left:433px;top:981px" width="7" height="10" viewBox="0 0 7 10" fill="none" stroke="#c8d0da" stroke-width="1.3" stroke-linecap="round" stroke-linejoin="round"><path d="M1.5 1 L5.5 5 L1.5 9"/></svg>
<svg class="abs" style="left:457px;top:981px" width="11" height="10" viewBox="0 0 11 10" fill="none" stroke="#c8d0da" stroke-width="1.3" stroke-linecap="round" stroke-linejoin="round"><path d="M1.5 1 L5 5 L1.5 9"/><path d="M6 1 L9.5 5 L6 9"/></svg>
<div class="abs tx" style="left:1514px;top:980.5px;font-size:14px;color:#222;letter-spacing:0.15px;-webkit-text-stroke:0.35px #222">1 of 1 pages (10 items)</div>
<!--/MAIN-->
</body></html>
